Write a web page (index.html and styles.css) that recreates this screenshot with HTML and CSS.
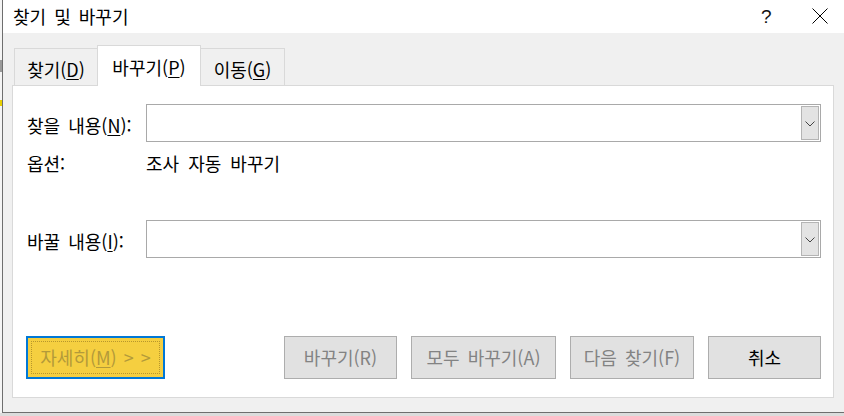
FILE: index.html
```html
<!DOCTYPE html>
<html lang="ko">
<head>
<meta charset="utf-8">
<title>찾기 및 바꾸기</title>
<link rel="stylesheet" href="styles.css">
</head>
<body>
<div class="desk">
  <div class="edge"><span class="edge-mark"></span><span class="edge-yellow"></span></div>
  <div class="window">
    <div class="titlebar">
      <span class="title">찾기 및 바꾸기</span>
      <span class="help">?</span>
      <span class="close">
        <svg width="16" height="16" viewBox="0 0 16 16"><path d="M0.5 0.5 L15.5 15.5 M15.5 0.5 L0.5 15.5" stroke="#000" stroke-width="1" fill="none"/></svg>
      </span>
    </div>
    <div class="client">
      <div class="tabs">
        <div class="tab">찾기(<u>D</u>)</div>
        <div class="tab active">바꾸기(<u>P</u>)</div>
        <div class="tab">이동(<u>G</u>)</div>
      </div>
      <div class="panel">
        <div class="row row-find">
          <label class="label">찾을 내용(<u>N</u>):</label>
          <div class="combo"><span class="drop"><svg width="10" height="6" viewBox="0 0 10 6"><path d="M0.5 0.5 L5 5 L9.5 0.5" stroke="#444" stroke-width="1" fill="none"/></svg></span></div>
        </div>
        <div class="row row-opt">
          <span class="label">옵션:</span>
          <span class="opt-value">조사 자동 바꾸기</span>
        </div>
        <div class="row row-replace">
          <label class="label">바꿀 내용(<u>I</u>):</label>
          <div class="combo"><span class="drop"><svg width="10" height="6" viewBox="0 0 10 6"><path d="M0.5 0.5 L5 5 L9.5 0.5" stroke="#444" stroke-width="1" fill="none"/></svg></span></div>
        </div>
        <div class="buttons">
          <button class="btn more"><span class="focus">자세히(<u>M</u>) &gt; &gt;</span></button>
          <div class="spacer"></div>
          <button class="btn dis w-replace">바꾸기(R)</button>
          <button class="btn dis w-all">모두 바꾸기(A)</button>
          <button class="btn dis w-next">다음 찾기(F)</button>
          <button class="btn w-cancel">취소</button>
        </div>
      </div>
    </div>
  </div>
</div>
</body>
</html>
```
FILE: styles.css
```css
* { box-sizing: border-box; }
html, body {
  margin: 0;
  padding: 0;
  width: 844px;
  height: 416px;
  overflow: hidden;
  background: #dcdcdc;
  font-family: "Noto Sans CJK KR", "Noto Sans", sans-serif;
  color: #000;
}
.desk {
  display: flex;
  height: 413px;
}
.edge {
  width: 2px;
  background: #f4f4f4;
  display: flex;
  flex-direction: column;
}
.edge-mark {
  height: 12px;
  margin-top: 60px;
  background: #9a9a9a;
}
.edge-yellow {
  height: 6px;
  margin-top: 28px;
  background: #e8d000;
}
.window {
  width: 842px;
  height: 413px;
  border-left: 1px solid #6e6e6e;
  border-bottom: 1px solid #6e6e6e;
  display: flex;
  flex-direction: column;
  background: #f0f0f0;
}
.titlebar {
  height: 33px;
  background: #fff;
  display: flex;
  align-items: center;
  padding-left: 10px;
  flex: none;
}
.title {
  font-size: 18px;
  line-height: 22px;
  padding-bottom: 1px;
  word-spacing: 3px;
}
.help {
  margin-left: auto;
  font-family: "Liberation Sans", sans-serif;
  font-size: 19px;
  line-height: 20px;
  width: 11px;
  margin-right: 40px;
  color: #111;
}
.close {
  display: flex;
  width: 16px;
  height: 16px;
  margin-right: 16px;
  margin-bottom: 1px;
}
.client {
  flex: 1;
  display: flex;
  flex-direction: column;
  padding: 13px 0 0 9px;
}
.tabs {
  display: flex;
  align-items: flex-end;
  height: 39px;
  padding-left: 2px;
}
.tab {
  height: 37px;
  border: 1px solid #d9d9d9;
  border-bottom: none;
  background: #f0f0f0;
  font-size: 18px;
  line-height: 22px;
  display: flex;
  align-items: center;
  justify-content: center;
  padding-top: 3px;
}
.tab:first-child { width: 83px; border-right: none; }
.tab:last-child { width: 84px; border-left: none; }
.tab.active {
  width: 104px;
  height: 41px;
  margin-bottom: -1px;
  background: #fff;
  position: relative;
  z-index: 1;
  padding-top: 2px;
}
.tab u, .label u, .more u { text-underline-offset: 2px; text-decoration-thickness: 1px; }
.panel {
  width: 822px;
  height: 313px;
  border: 1px solid #d9d9d9;
  background: #fff;
  display: flex;
  flex-direction: column;
  padding: 0 12px 0 13px;
}
.row {
  display: flex;
  align-items: center;
}
.label {
  width: 120px;
  padding-left: 1px;
  font-size: 18px;
  line-height: 22px;
  white-space: nowrap;
  word-spacing: 3px;
}
.row-find { margin-top: 18px; height: 38px; }
.row-find .label, .row-replace .label { padding-top: 4px; }
.row-opt { margin-top: 9px; height: 24px; }
.row-replace { margin-top: 45px; height: 38px; }
.opt-value { font-size: 18px; line-height: 22px; word-spacing: 4px; }
.combo {
  width: 676px;
  height: 38px;
  border: 1px solid #a9a9a9;
  display: flex;
  justify-content: flex-end;
  padding: 1px;
}
.drop {
  width: 18px;
  height: 34px;
  background: #e3e3e3;
  border: 1px solid #b4b4b4;
  display: flex;
  align-items: center;
  justify-content: center;
}
.drop svg { margin-top: 1px; }
.buttons {
  margin-top: auto;
  margin-bottom: 18px;
  display: flex;
  gap: 14px;
  height: 43px;
}
.spacer { flex: 1; }
.btn {
  height: 43px;
  border: 1px solid #adadad;
  background: #e1e1e1;
  font-family: "Noto Sans CJK KR", "Noto Sans", sans-serif;
  font-size: 18px;
  line-height: 22px;
  padding: 0 0 2px;
  color: #000;
  word-spacing: 3px;
}
.btn.dis { color: #838383; }
.w-replace { width: 113px; }
.w-all { width: 145px; }
.w-next { width: 124px; }
.w-cancel { width: 113px; }
.more {
  width: 139px;
  background: #f5cf40;
  border: 2px solid #0078d7;
  padding: 3px;
  color: #b39a3a;
  display: flex;
  word-spacing: 2px;
}
.focus {
  flex: 1;
  border: 1px dotted #b8972c;
  display: flex;
  align-items: center;
  justify-content: center;
  padding-bottom: 2px;
  white-space: nowrap;
}
```
